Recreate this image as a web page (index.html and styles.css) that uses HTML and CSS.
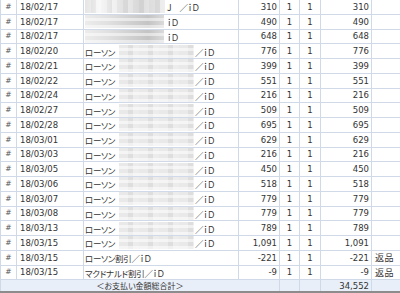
FILE: index.html
```
<!DOCTYPE html>
<html lang="ja">
<head>
<meta charset="utf-8">
<link rel="stylesheet" href="styles.css">
</head>
<body>
<table class="list">
<colgroup>
<col class="w-mark"><col class="w-date"><col class="w-desc"><col class="w-amt"><col class="w-q"><col class="w-q2"><col class="w-sum"><col class="w-note">
</colgroup>
<tbody>
<tr><td class="mark">#</td><td class="date">18/02/17</td><td class="desc"><span class="blur bA"></span><span class="jp t1">J　／ｉＤ</span></td><td class="num">310</td><td class="c">1</td><td class="c">1</td><td class="num">310</td><td class="note"></td></tr>
<tr><td class="mark">#</td><td class="date">18/02/17</td><td class="desc"><span class="blur bB"></span><span class="jp t2">ｉＤ</span></td><td class="num">490</td><td class="c">1</td><td class="c">1</td><td class="num">490</td><td class="note"></td></tr>
<tr><td class="mark">#</td><td class="date">18/02/17</td><td class="desc"><span class="blur bB"></span><span class="jp t2">ｉＤ</span></td><td class="num">648</td><td class="c">1</td><td class="c">1</td><td class="num">648</td><td class="note"></td></tr>
<tr><td class="mark">#</td><td class="date">18/02/20</td><td class="desc"><span class="jp">ローソン</span><span class="blur bL"></span><span class="jp">／ｉＤ</span></td><td class="num">776</td><td class="c">1</td><td class="c">1</td><td class="num">776</td><td class="note"></td></tr>
<tr><td class="mark">#</td><td class="date">18/02/21</td><td class="desc"><span class="jp">ローソン</span><span class="blur bL"></span><span class="jp">／ｉＤ</span></td><td class="num">399</td><td class="c">1</td><td class="c">1</td><td class="num">399</td><td class="note"></td></tr>
<tr><td class="mark">#</td><td class="date">18/02/22</td><td class="desc"><span class="jp">ローソン</span><span class="blur bL"></span><span class="jp">／ｉＤ</span></td><td class="num">551</td><td class="c">1</td><td class="c">1</td><td class="num">551</td><td class="note"></td></tr>
<tr><td class="mark">#</td><td class="date">18/02/24</td><td class="desc"><span class="jp">ローソン</span><span class="blur bL"></span><span class="jp">／ｉＤ</span></td><td class="num">216</td><td class="c">1</td><td class="c">1</td><td class="num">216</td><td class="note"></td></tr>
<tr><td class="mark">#</td><td class="date">18/02/27</td><td class="desc"><span class="jp">ローソン</span><span class="blur bL"></span><span class="jp">／ｉＤ</span></td><td class="num">509</td><td class="c">1</td><td class="c">1</td><td class="num">509</td><td class="note"></td></tr>
<tr><td class="mark">#</td><td class="date">18/02/28</td><td class="desc"><span class="jp">ローソン</span><span class="blur bL"></span><span class="jp">／ｉＤ</span></td><td class="num">695</td><td class="c">1</td><td class="c">1</td><td class="num">695</td><td class="note"></td></tr>
<tr><td class="mark">#</td><td class="date">18/03/01</td><td class="desc"><span class="jp">ローソン</span><span class="blur bL"></span><span class="jp">／ｉＤ</span></td><td class="num">629</td><td class="c">1</td><td class="c">1</td><td class="num">629</td><td class="note"></td></tr>
<tr><td class="mark">#</td><td class="date">18/03/03</td><td class="desc"><span class="jp">ローソン</span><span class="blur bL"></span><span class="jp">／ｉＤ</span></td><td class="num">216</td><td class="c">1</td><td class="c">1</td><td class="num">216</td><td class="note"></td></tr>
<tr><td class="mark">#</td><td class="date">18/03/05</td><td class="desc"><span class="jp">ローソン</span><span class="blur bL"></span><span class="jp">／ｉＤ</span></td><td class="num">450</td><td class="c">1</td><td class="c">1</td><td class="num">450</td><td class="note"></td></tr>
<tr><td class="mark">#</td><td class="date">18/03/06</td><td class="desc"><span class="jp">ローソン</span><span class="blur bL"></span><span class="jp">／ｉＤ</span></td><td class="num">518</td><td class="c">1</td><td class="c">1</td><td class="num">518</td><td class="note"></td></tr>
<tr><td class="mark">#</td><td class="date">18/03/07</td><td class="desc"><span class="jp">ローソン</span><span class="blur bL"></span><span class="jp">／ｉＤ</span></td><td class="num">779</td><td class="c">1</td><td class="c">1</td><td class="num">779</td><td class="note"></td></tr>
<tr><td class="mark">#</td><td class="date">18/03/08</td><td class="desc"><span class="jp">ローソン</span><span class="blur bL"></span><span class="jp">／ｉＤ</span></td><td class="num">779</td><td class="c">1</td><td class="c">1</td><td class="num">779</td><td class="note"></td></tr>
<tr><td class="mark">#</td><td class="date">18/03/13</td><td class="desc"><span class="jp">ローソン</span><span class="blur bL"></span><span class="jp">／ｉＤ</span></td><td class="num">789</td><td class="c">1</td><td class="c">1</td><td class="num">789</td><td class="note"></td></tr>
<tr><td class="mark">#</td><td class="date">18/03/15</td><td class="desc"><span class="jp">ローソン</span><span class="blur bL"></span><span class="jp">／ｉＤ</span></td><td class="num">1,091</td><td class="c">1</td><td class="c">1</td><td class="num">1,091</td><td class="note"></td></tr>
<tr><td class="mark">#</td><td class="date">18/03/15</td><td class="desc"><span class="jp">ローソン割引／ｉＤ</span></td><td class="num">-221</td><td class="c">1</td><td class="c">1</td><td class="num">-221</td><td class="note"><span class="jp">返品</span></td></tr>
<tr><td class="mark">#</td><td class="date">18/03/15</td><td class="desc"><span class="jp">マクドナルド割引／ｉＤ</span></td><td class="num">-9</td><td class="c">1</td><td class="c">1</td><td class="num">-9</td><td class="note"><span class="jp">返品</span></td></tr>
<tr class="total"><td class="tlabel" colspan="4"><span class="jp">＜お支払い金額総合計＞</span></td><td></td><td></td><td class="num">34,552</td><td></td></tr>
</tbody>
</table>
</body>
</html>
```
FILE: styles.css
```
html, body {
  margin: 0;
  padding: 0;
  background: #ffffff;
  overflow: hidden;
}
.list {
  border-collapse: collapse;
  table-layout: fixed;
  width: 400px;
  margin-top: -1px;
  font-family: "DejaVu Sans", Verdana, sans-serif;
  font-size: 8.5px;
  color: #333333;
}
.w-mark { width: 16px; }
.w-date { width: 67px; }
.w-desc { width: 155px; }
.w-amt { width: 41px; }
.w-q { width: 20px; }
.w-q2 { width: 21px; }
.w-sum { width: 51px; }
.w-note { width: 29px; }
.list td {
  height: 14.75px;
  padding: 0 2px 0 3px;
  border: 1px solid #d0d9e8;
  white-space: nowrap;
  overflow: hidden;
  line-height: 12px;
  box-sizing: border-box;
}
.list td.mark {
  text-align: center;
  padding: 0;
  color: #555;
  font-size: 7.5px;
}
.list td.c {
  text-align: center;
  padding: 0;
}
.list td.num {
  text-align: right;
  padding: 0 2px 0 0;
}
.list td.desc {
  padding-left: 1px;
}
.list td.note {
  padding-left: 3px;
}
.jp {
  font-family: "Noto Sans CJK JP", sans-serif;
  font-size: 8.5px;
  font-feature-settings: "palt";
  letter-spacing: -0.3px;
  vertical-align: middle;
}
.note .jp {
  font-size: 9px;
  letter-spacing: 0.5px;
}
.blur {
  display: inline-block;
  height: 13px;
  vertical-align: middle;
}
.bA {
  width: 80px;
  margin-right: 2px;
  background:
    linear-gradient(90deg, rgba(255,255,255,0) 0, rgba(255,255,255,0.6) 20%, rgba(255,255,255,0) 40%, rgba(190,190,190,0.35) 70%, rgba(255,255,255,0) 100%),
    repeating-linear-gradient(90deg, #e6e6e6 0 6px, #dcdcdc 6px 11px, #efefef 11px 16px),
    #e8e8e8;
}
.bB {
  width: 79px;
  margin-right: 3px;
  background:
    repeating-linear-gradient(0deg, rgba(255,255,255,0.5) 0 3px, rgba(255,255,255,0) 3px 7px),
    linear-gradient(90deg, #ececec 0, #e0e0e0 30%, #cfcfcf 60%, #c4c4c4 80%, #dadada 100%);
}
.bL {
  width: 75px;
  margin: 0 1px 0 4px;
  background:
    repeating-linear-gradient(0deg, rgba(255,255,255,0.55) 0 3px, rgba(255,255,255,0) 3px 7px),
    repeating-linear-gradient(90deg, #e9e9e9 0 9px, #dedede 9px 14px, #ececec 14px 20px),
    #e6e6e6;
}
.t1 { margin-left: 0; }
.list .total td {
  height: 12px;
  line-height: 10px;
  background: #e9eff8;
  border-bottom: 2px solid #8c8c8c;
}
.total td.tlabel {
  text-align: center;
  padding: 0;
}
.tlabel .jp {
  font-size: 8px;
  letter-spacing: 0;
}
```
